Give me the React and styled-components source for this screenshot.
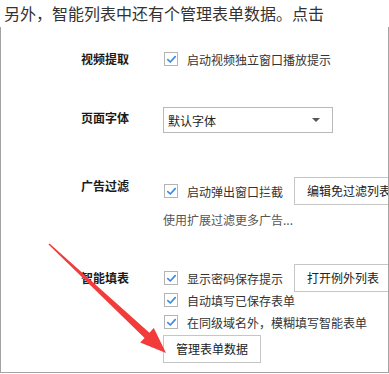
import styled, { createGlobalStyle } from "styled-components"

const GlobalStyle = createGlobalStyle`
  body {
    margin: 0;
    background: #fff;
    font-family: "Noto Sans CJK SC", "Noto Sans", sans-serif;
  }
`

const Check = () => (
	<CheckBox>
		<svg width="11" height="11" viewBox="0 0 11 11">
			<path
				d="M1.8 5.6 L4.3 8 L9.2 2.6"
				fill="none"
				stroke="#3f8ae0"
				strokeWidth="1.7"
				strokeLinecap="round"
				strokeLinejoin="round"
			/>
		</svg>
	</CheckBox>
)

const CheckItem = ({ children, button }) => (
	<CheckLine>
		<Check />
		<CheckText>{children}</CheckText>
		{button && <Button $ml={11}>{button}</Button>}
	</CheckLine>
)

const Arrow = () => (
	<ArrowLayer width="389" height="374" viewBox="0 0 389 374">
		<polygon
			points="49.5,243.5 149.4,332.7 153.8,328 166,353 140.2,342.6 144.6,337.9 48.5,244.5"
			fill="#f23b3b"
		/>
	</ArrowLayer>
)

const App = () => {
	return (
		<Page>
			<GlobalStyle />
			<Heading>另外，智能列表中还有个管理表单数据。点击</Heading>
			<Panel>
				<Section>
					<Label>视频提取</Label>
					<Controls>
						<CheckItem>启动视频独立窗口播放提示</CheckItem>
					</Controls>
				</Section>
				<Section $mt={37}>
					<Label>页面字体</Label>
					<Controls>
						<Select>
							<span>默认字体</span>
							<Caret />
						</Select>
					</Controls>
				</Section>
				<Section $mt={47}>
					<Label $shift={-5}>广告过滤</Label>
					<Controls>
						<CheckItem button="编辑免过滤列表">启动弹出窗口拦截</CheckItem>
						<Hint>使用扩展过滤更多广告...</Hint>
					</Controls>
				</Section>
				<Section $mt={36}>
					<Label>智能填表</Label>
					<Controls>
						<CheckItem button="打开例外列表">显示密码保存提示</CheckItem>
						<CheckItem>自动填写已保存表单</CheckItem>
						<CheckItem>在同级域名外，模糊填写智能表单</CheckItem>
						<Button $mt={2}>管理表单数据</Button>
					</Controls>
				</Section>
			</Panel>
			<Arrow />
		</Page>
	)
}

const Page = styled.div`
	position: relative;
	width: 389px;
	height: 374px;
	overflow: hidden;
`
const Heading = styled.div`
	height: 27px;
	padding-left: 4px;
	font-size: 16px;
	line-height: 26px;
	color: #333;
	white-space: nowrap;
`
const Panel = styled.div`
	box-sizing: border-box;
	width: 389px;
	height: 346px;
	border: 1px solid #a3a3a3;
	border-top: none;
	padding: 21px 0 0 80px;
	overflow: hidden;
`
const Section = styled.div`
	display: flex;
	align-items: flex-start;
	margin-top: ${(p) => p.$mt || 0}px;
`
const Label = styled.div`
	flex: none;
	width: 82px;
	margin-top: ${(p) => p.$shift || 0}px;
	font-size: 12px;
	font-weight: bold;
	line-height: 22px;
	color: #1a1a1a;
`
const Controls = styled.div`
	display: flex;
	flex-direction: column;
	align-items: flex-start;
	white-space: nowrap;
`
const CheckLine = styled.div`
	display: flex;
	align-items: center;
	height: 22px;
	padding-left: 1px;
`
const CheckBox = styled.span`
	flex: none;
	display: flex;
	align-items: center;
	justify-content: center;
	box-sizing: border-box;
	width: 14px;
	height: 14px;
	border: 1px solid #b4b4b4;
	background: #fff;
`
const CheckText = styled.span`
	margin-left: 9px;
	font-size: 12px;
	color: #333;
`
const Button = styled.div`
	flex: none;
	box-sizing: border-box;
	height: 28px;
	margin-left: ${(p) => p.$ml || 0}px;
	margin-top: ${(p) => p.$mt || 0}px;
	padding: 0 12px;
	border: 1px solid #c6c6c6;
	background: #fff;
	font-size: 12px;
	line-height: 26px;
	color: #222;
`
const Select = styled.div`
	display: flex;
	align-items: center;
	justify-content: space-between;
	box-sizing: border-box;
	width: 170px;
	height: 26px;
	padding: 0 12px 0 4px;
	border: 1px solid #b8b8b8;
	font-size: 12px;
	color: #222;
`
const Caret = styled.span`
	width: 0;
	height: 0;
	border-left: 4px solid transparent;
	border-right: 4px solid transparent;
	border-top: 4px solid #555;
`
const Hint = styled.div`
	margin-top: 7px;
	font-size: 12px;
	line-height: 22px;
	color: #555;
`
const ArrowLayer = styled.svg`
	position: absolute;
	left: 0;
	top: 0;
	pointer-events: none;
`

export default App
